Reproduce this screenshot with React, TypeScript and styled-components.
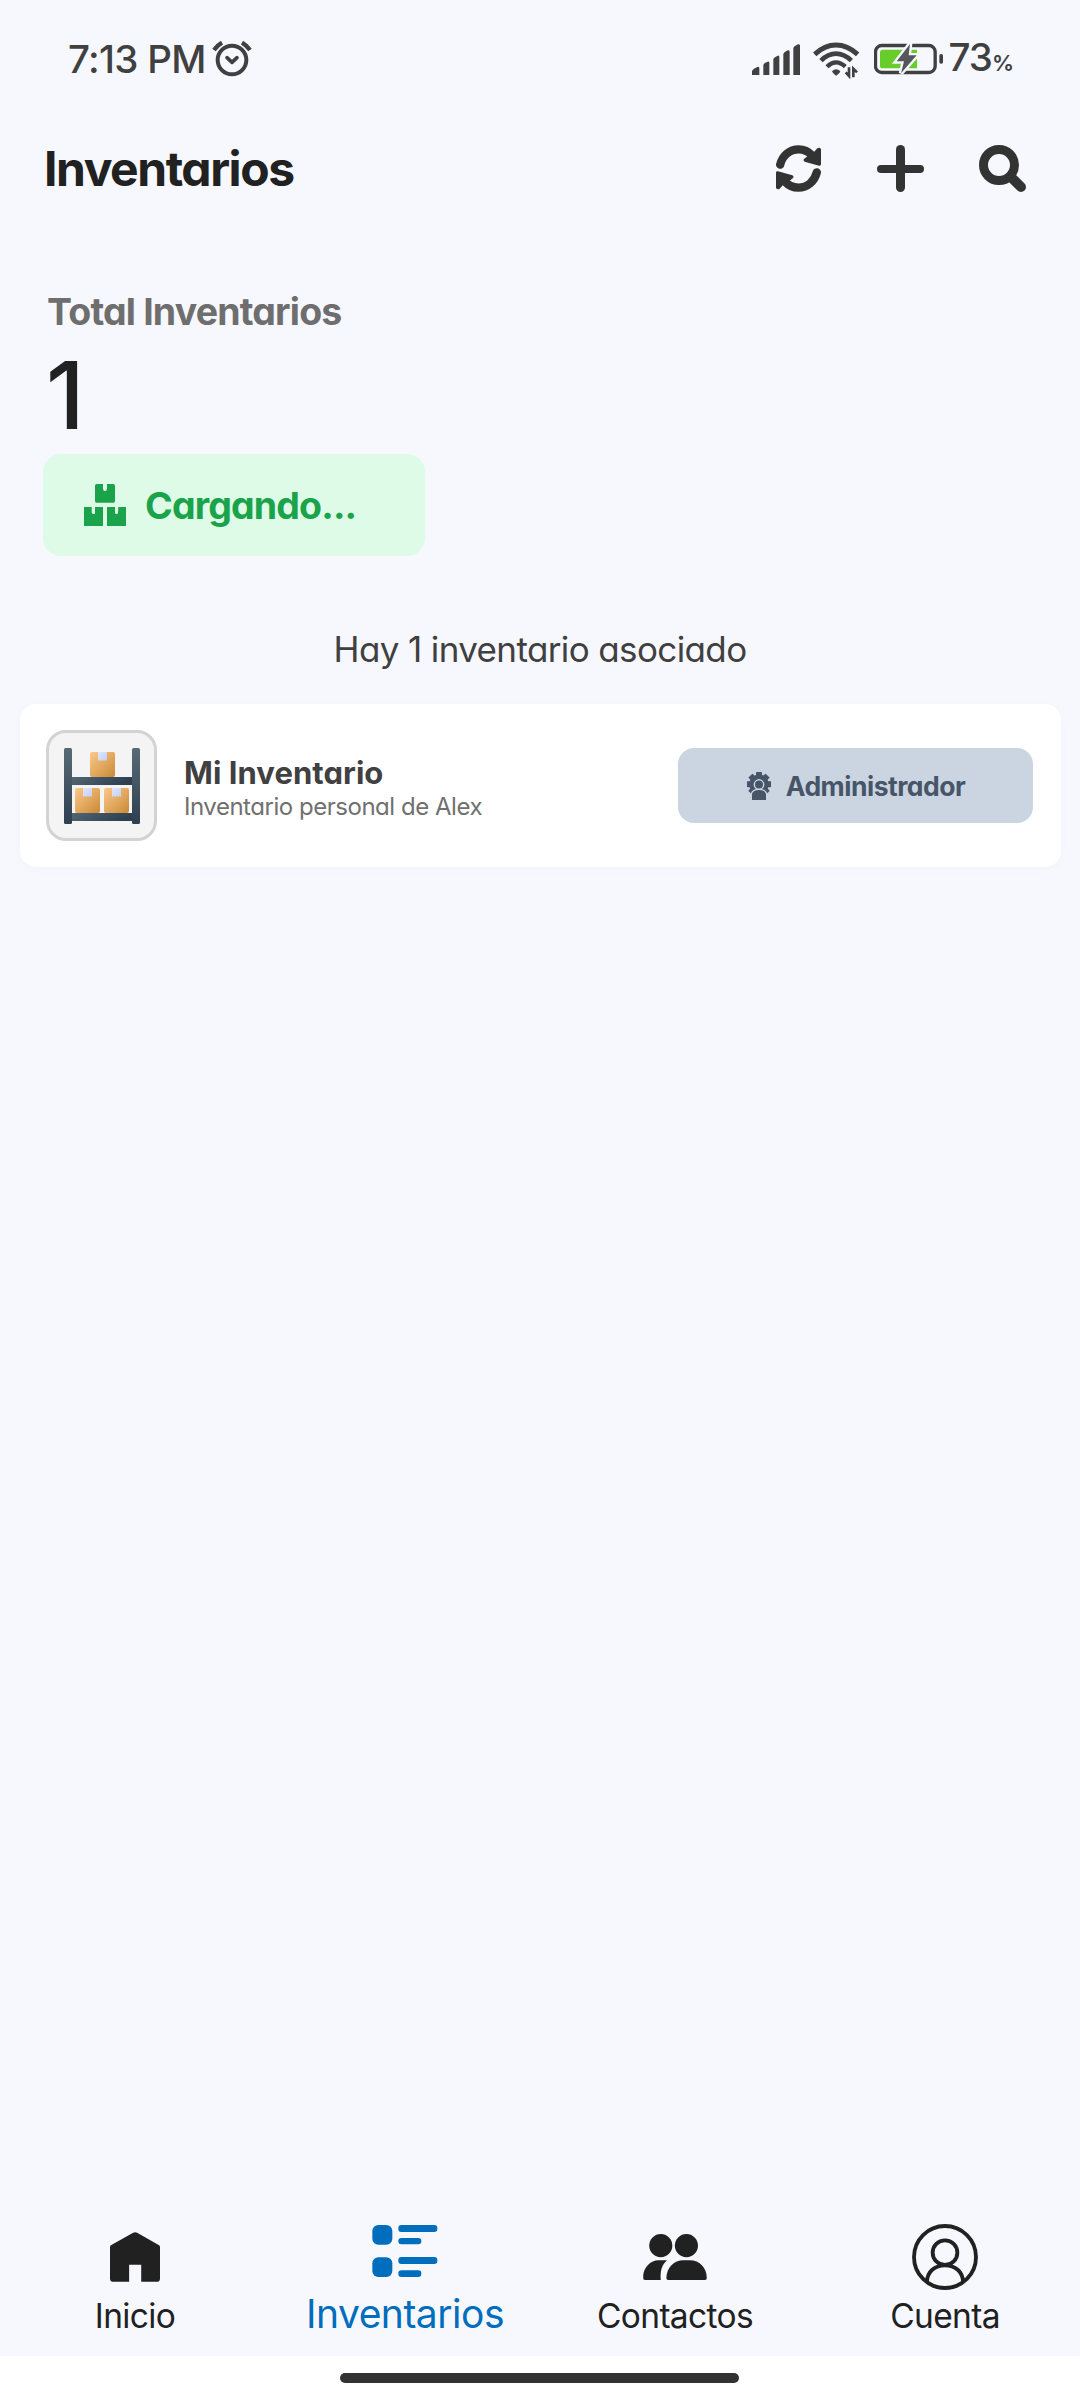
import React from "react";
import styled, { createGlobalStyle } from "styled-components";

const GlobalStyle = createGlobalStyle`
  * { box-sizing: border-box; }
  body { margin: 0; background: #f7f8fe; }
  svg { display: block; flex: none; }
`;

const Screen = styled.div`
  width: 1080px;
  height: 2400px;
  display: flex;
  flex-direction: column;
  background: #f7f8fe;
  color: #212121;
  font-family: Inter, "Noto Sans", sans-serif;
  font-feature-settings: "cv11";
  white-space: nowrap;
`;

const StatusBar = styled.div`
  height: 118px;
  display: flex;
  align-items: center;
  justify-content: space-between;
  padding: 0 68px 0 68px;
  color: #404040;
`;

const StatusGroup = styled.div`
  display: flex;
  align-items: center;
`;

const Clock = styled.span`
  font-size: 38.5px;
  line-height: 46px;
  font-weight: 500;
  letter-spacing: -0.7px;
  margin-right: 6px;
`;

const Indicators = styled(StatusGroup)`
  gap: 13.5px;
`;

const BatteryLevel = styled.span`
  display: flex;
  align-items: baseline;
  font-size: 38.5px;
  line-height: 46px;
  font-weight: 500;
  letter-spacing: -1px;
  margin-left: -8px;
  padding-top: 1px;
`;

const Percent = styled.span`
  font-size: 22px;
  font-weight: 600;
  letter-spacing: -2px;
`;

const Header = styled.header`
  height: 101px;
  display: flex;
  align-items: center;
  justify-content: space-between;
  padding: 0 54px 0 44px;
`;

const Title = styled.h1`
  margin: 0;
  font-size: 48px;
  line-height: 58px;
  font-weight: 660;
  letter-spacing: -1.45px;
`;

const Actions = styled.div`
  display: flex;
  gap: 55.5px;
  color: #333333;
`;

const Summary = styled.section`
  display: flex;
  flex-direction: column;
  align-items: flex-start;
  padding: 69px 43px 0;
`;

const SummaryLabel = styled.div`
  margin-left: 4px;
  font-size: 37.5px;
  line-height: 48px;
  font-weight: 650;
  letter-spacing: -0.83px;
  color: #6e6e6e;
`;

const SummaryValue = styled.div`
  margin: 9px 0 9px 3px;
  font-size: 93px;
  line-height: 100px;
  font-weight: 500;
`;

const StatusBadge = styled.div`
  width: 382px;
  height: 102px;
  display: flex;
  align-items: center;
  gap: 19px;
  padding-left: 41px;
  border-radius: 18px;
  background: #ddfbe7;
  color: #1aa34a;
`;

const BadgeLabel = styled.span`
  padding-top: 1px;
  font-size: 37.5px;
  line-height: 46px;
  font-weight: 650;
  letter-spacing: -0.85px;
`;

const CountText = styled.p`
  margin: 69px 0 31px;
  text-align: center;
  font-size: 35px;
  line-height: 48px;
  letter-spacing: -0.62px;
  color: #404040;
`;

const Card = styled.article`
  height: 163px;
  margin: 0 19px 0 20px;
  padding: 0 28px 0 26px;
  display: flex;
  align-items: center;
  border-radius: 16px;
  background: #ffffff;
  box-shadow: 0 2px 10px rgba(40, 50, 90, 0.025);
`;

const Thumb = styled.div`
  width: 111px;
  height: 111px;
  display: flex;
  align-items: center;
  justify-content: center;
  border: 3px solid #d3d3d3;
  border-radius: 20px;
  background: #f4f4f4;
`;

const CardText = styled.div`
  flex: 1;
  padding: 5px 0 0 27px;
`;

const CardTitle = styled.div`
  font-size: 31px;
  line-height: 36px;
  font-weight: 670;
  letter-spacing: 0.05px;
  color: #404040;
`;

const CardSubtitle = styled.div`
  font-size: 24px;
  line-height: 31px;
  letter-spacing: -0.47px;
  color: #707070;
`;

const RoleButton = styled.button`
  width: 355px;
  height: 75px;
  display: flex;
  align-items: center;
  justify-content: center;
  gap: 15px;
  padding: 0 0 0 1px;
  border: 0;
  border-radius: 16px;
  background: #cbd5e1;
  color: #475569;
  font: 650 26.5px/32px Inter, sans-serif;
  font-feature-settings: "cv11";
  letter-spacing: -0.5px;
`;

const Nav = styled.nav`
  margin-top: auto;
  height: 139px;
  display: flex;
`;

const NavItem = styled.a<{ $active?: boolean }>`
  width: 270px;
  display: flex;
  flex-direction: column;
  align-items: center;
  color: ${(p) => (p.$active ? "#006dbd" : "#212121")};
`;

const NavIcon = styled.span<{ $active?: boolean }>`
  height: 80px;
  display: flex;
  align-items: center;
  padding-bottom: ${(p) => (p.$active ? "12px" : "0")};
`;

const NavLabel = styled.span<{ $active?: boolean }>`
  font-size: ${(p) => (p.$active ? "39px" : "33.5px")};
  line-height: ${(p) => (p.$active ? "34px" : "39px")};
  font-weight: 400;
  font-feature-settings: normal;
  letter-spacing: ${(p) => (p.$active ? "-0.5px" : "-0.65px")};
`;

const GestureBar = styled.div`
  height: 44px;
  display: flex;
  justify-content: center;
  padding: 17px 1px 0 0;
  background: #ffffff;
`;

const Handle = styled.div`
  width: 399px;
  height: 10px;
  border-radius: 5px;
  background: #323232;
`;

const AlarmIcon = () => (
  <svg width="40" height="40" viewBox="517 57 120 120" fill="none" stroke="currentColor" strokeLinecap="round" strokeLinejoin="round">
    <circle cx="577" cy="120" r="43" strokeWidth="12" />
    <path d="M562 113L577 127L592 113" strokeWidth="11" />
    <path d="M523 90Q533 76 547 68M607 68Q621 76 631 90" strokeWidth="13" strokeLinecap="butt" />
  </svg>
);

const SignalIcon = () => (
  <svg width="48" height="40" viewBox="63 57 144 120" fill="currentColor">
    <path d="M63 165V154Q64 149 69 146L79 141Q85 139 85 145V165ZM97 165V135Q98 130 103 128L110 125Q115 123 115 129V165ZM127 165V118Q128 113 133 111L140 107Q145 105 145 111V165ZM157 165V102Q158 97 163 95L170 91Q176 89 176 95V165ZM187 165V84Q188 79 193 77L201 73Q207 71 207 77V165Z" />
  </svg>
);

const WifiIcon = () => (
  <svg width="47" height="40" viewBox="245 57 141 120" fill="none" stroke="currentColor">
    <path d="M250 103Q280 75 314 75T379 103" strokeWidth="15" />
    <path d="M269 122Q290 101 314 101T360 122" strokeWidth="14" />
    <path d="M287 140Q300 127 314 127T342 140" strokeWidth="13" />
    <path d="M302 154Q314 142 327 154Q326 160 314 167Q303 160 302 154Z" fill="currentColor" stroke="none" />
    <path d="M353 142V168L343 157M366 172V146L377 157" strokeWidth="8" />
  </svg>
);

const BatteryIcon = () => (
  <svg width="69" height="40" viewBox="429 57 207 120">
    <rect x="433.500" y="76.500" width="179" height="81" rx="19" fill="none" stroke="currentColor" strokeWidth="10" />
    <path d="M455 89H558V145H455Q447 145 447 137V97Q447 89 455 89Z" fill="#68cc2a" />
    <path d="M537 72L497 124H519L510 160L557 106H533Z" fill="#55585a" stroke="#f7f8fe" strokeWidth="14" paintOrder="stroke" />
    <rect x="625" y="102" width="11" height="29" rx="5" fill="currentColor" />
  </svg>
);

const RefreshIcon = () => (
  <svg width="45" height="47" viewBox="78 45 135 141">
    <g id="half">
      <path d="M90.500 104C97 77 119 58 146 58C164 58 175 64 186 76" fill="none" stroke="currentColor" strokeWidth="25" strokeLinecap="round" />
      <path d="M213 57Q208 51 202 55L190 68L172 79L161 88Q159 92 164 95L207 107Q213 108 213 103Z" fill="currentColor" />
    </g>
    <use href="#half" transform="rotate(180 145.5 115.5)" />
  </svg>
);

const PlusIcon = () => (
  <svg width="47" height="47" viewBox="381 45 141 141" fill="none" stroke="currentColor" strokeLinecap="round">
    <path d="M451.500 58.500V172.500" strokeWidth="27" />
    <path d="M393 117H510" strokeWidth="24" />
  </svg>
);

const SearchIcon = () => (
  <svg width="47" height="47" viewBox="687 45 141 141" fill="none" stroke="currentColor" strokeLinecap="round">
    <circle cx="747" cy="105" r="46.500" strokeWidth="27" />
    <path d="M785 143L813 171" strokeWidth="30" />
  </svg>
);

const BoxesIcon = () => (
  <svg width="42" height="42" viewBox="192 642 126 126" fill="currentColor">
    <path d="M230 642H249V656Q249 663 255 663Q261 663 261 656V642H280Q285 642 285 647V693Q285 698 280 698H230Q225 698 225 693V647Q225 642 230 642Z" />
    <path d="M192 711H215V728Q218 733 221 732Q225 733 225 728V711H249V768H192ZM261 711H285V728Q286 733 289 732Q293 733 294 728L295 711H318V768H261Z" />
  </svg>
);

const TapedBox = ({ x, y }: { x: number; y: number }) => (
  <g transform={`translate(${x} ${y})`}>
    <rect width="25" height="25" rx="2" fill="url(#carton)" />
    <path d="M8 0H17V9L15.500 8L14 9L12.500 8L11 9L9.500 8L8 9Z" fill="url(#tape)" />
  </g>
);

const ShelfIcon = () => (
  <svg width="76" height="76" viewBox="0 0 76 76">
    <defs>
      <linearGradient id="carton" x1="0" y1="0" x2="1" y2="1">
        <stop stopColor="#fbc98a" />
        <stop offset="1" stopColor="#ca8a36" />
      </linearGradient>
      <linearGradient id="tape" x1="0" y1="0" x2="1" y2="1">
        <stop stopColor="#e3e7fc" />
        <stop offset="1" stopColor="#c2cdf6" />
      </linearGradient>
      <linearGradient id="post" x1="0" y1="0" x2="0" y2="1">
        <stop stopColor="#586b75" />
        <stop offset="1" stopColor="#2e3f50" />
      </linearGradient>
      <linearGradient id="plank" x1="0" y1="0" x2="1" y2="0.2">
        <stop stopColor="#536772" />
        <stop offset="1" stopColor="#2e3f50" />
      </linearGradient>
    </defs>
    <rect x="7" y="29" width="62" height="8" fill="url(#plank)" />
    <rect x="7" y="65" width="62" height="8" fill="url(#plank)" />
    <rect width="8" height="76" rx="1.500" fill="url(#post)" />
    <rect x="68" width="8" height="76" rx="1.500" fill="url(#post)" />
    <TapedBox x={26} y={4} />
    <TapedBox x={11} y={40} />
    <TapedBox x={40} y={40} />
  </svg>
);

const AdminIcon = () => (
  <svg width="24" height="28" viewBox="0 0 24 28">
    <g fill="#475569">
      <circle cx="12" cy="12.200" r="9.800" />
      {[0, 45, 90, 135].map((a) => (
        <rect key={a} x="9" y="0" width="6" height="24.400" rx="0.600" transform={`rotate(${a} 12 12.2)`} />
      ))}
    </g>
    <path d="M5 28V22Q6 18 12 18T19 22V28Z" fill="#475569" stroke="#cbd5e1" strokeWidth="2.600" paintOrder="stroke" />
    <circle cx="12" cy="12.500" r="4.700" fill="#475569" stroke="#cbd5e1" strokeWidth="1.400" />
  </svg>
);

const HomeIcon = () => (
  <svg width="50" height="50" viewBox="150 98 149 148" fill="currentColor">
    <path d="M219 100Q225 96 231 100L295 136Q299 138 299 142V236Q299 246 289 246H243V195H207V246H160Q150 246 150 236V142Q150 138 154 136Z" />
  </svg>
);

const ListIcon = () => (
  <svg width="66" height="52" viewBox="936 75 198 156" fill="currentColor">
    <rect x="937" y="75" width="60" height="59" rx="18" />
    <rect x="937" y="172" width="60" height="59" rx="18" />
    <rect x="1015" y="75" width="117" height="21" rx="9" />
    <rect x="1015" y="114" width="69" height="19" rx="9" />
    <rect x="1015" y="171" width="117" height="21" rx="9" />
    <rect x="1015" y="211" width="69" height="20" rx="9" />
  </svg>
);

const PeopleIcon = () => (
  <svg width="64" height="46" viewBox="309 101 192 139" fill="currentColor">
    <circle cx="362" cy="136" r="35" />
    <circle cx="439.500" cy="136" r="35" />
    <path d="M384 240Q379 240 379 234C379 202 403 180 430 180H450C478 180 501 202 501 234Q501 240 496 240Z" />
    <path d="M314 240Q309 240 309 234V226C311 200 332 180 355 180H381C366 193 360 210 362 240Z" />
  </svg>
);

const AccountIcon = () => (
  <svg width="66" height="66" viewBox="1116 72 198 198" fill="none" stroke="currentColor" strokeWidth="11.500">
    <circle cx="1215" cy="171" r="93" />
    <circle cx="1215" cy="158" r="37" />
    <path d="M1161 246C1161 215 1185 196 1215 196S1269 215 1269 246" />
  </svg>
);

const tabs = [
  { label: "Inicio", Icon: HomeIcon },
  { label: "Inventarios", Icon: ListIcon, active: true },
  { label: "Contactos", Icon: PeopleIcon },
  { label: "Cuenta", Icon: AccountIcon },
];

export default function App() {
  return (
    <>
      <GlobalStyle />
      <Screen>
        <StatusBar>
          <StatusGroup>
            <Clock>7:13 PM</Clock>
            <AlarmIcon />
          </StatusGroup>
          <Indicators>
            <SignalIcon />
            <WifiIcon />
            <BatteryIcon />
            <BatteryLevel>
              73<Percent>%</Percent>
            </BatteryLevel>
          </Indicators>
        </StatusBar>
        <Header>
          <Title>Inventarios</Title>
          <Actions>
            <RefreshIcon />
            <PlusIcon />
            <SearchIcon />
          </Actions>
        </Header>
        <Summary>
          <SummaryLabel>Total Inventarios</SummaryLabel>
          <SummaryValue>1</SummaryValue>
          <StatusBadge>
            <BoxesIcon />
            <BadgeLabel>Cargando...</BadgeLabel>
          </StatusBadge>
        </Summary>
        <CountText>Hay 1 inventario asociado</CountText>
        <Card>
          <Thumb>
            <ShelfIcon />
          </Thumb>
          <CardText>
            <CardTitle>Mi Inventario</CardTitle>
            <CardSubtitle>Inventario personal de Alex</CardSubtitle>
          </CardText>
          <RoleButton>
            <AdminIcon />
            Administrador
          </RoleButton>
        </Card>
        <Nav>
          {tabs.map(({ label, Icon, active }) => (
            <NavItem key={label} $active={active}>
              <NavIcon $active={active}>
                <Icon />
              </NavIcon>
              <NavLabel $active={active}>{label}</NavLabel>
            </NavItem>
          ))}
        </Nav>
        <GestureBar>
          <Handle />
        </GestureBar>
      </Screen>
    </>
  );
}
